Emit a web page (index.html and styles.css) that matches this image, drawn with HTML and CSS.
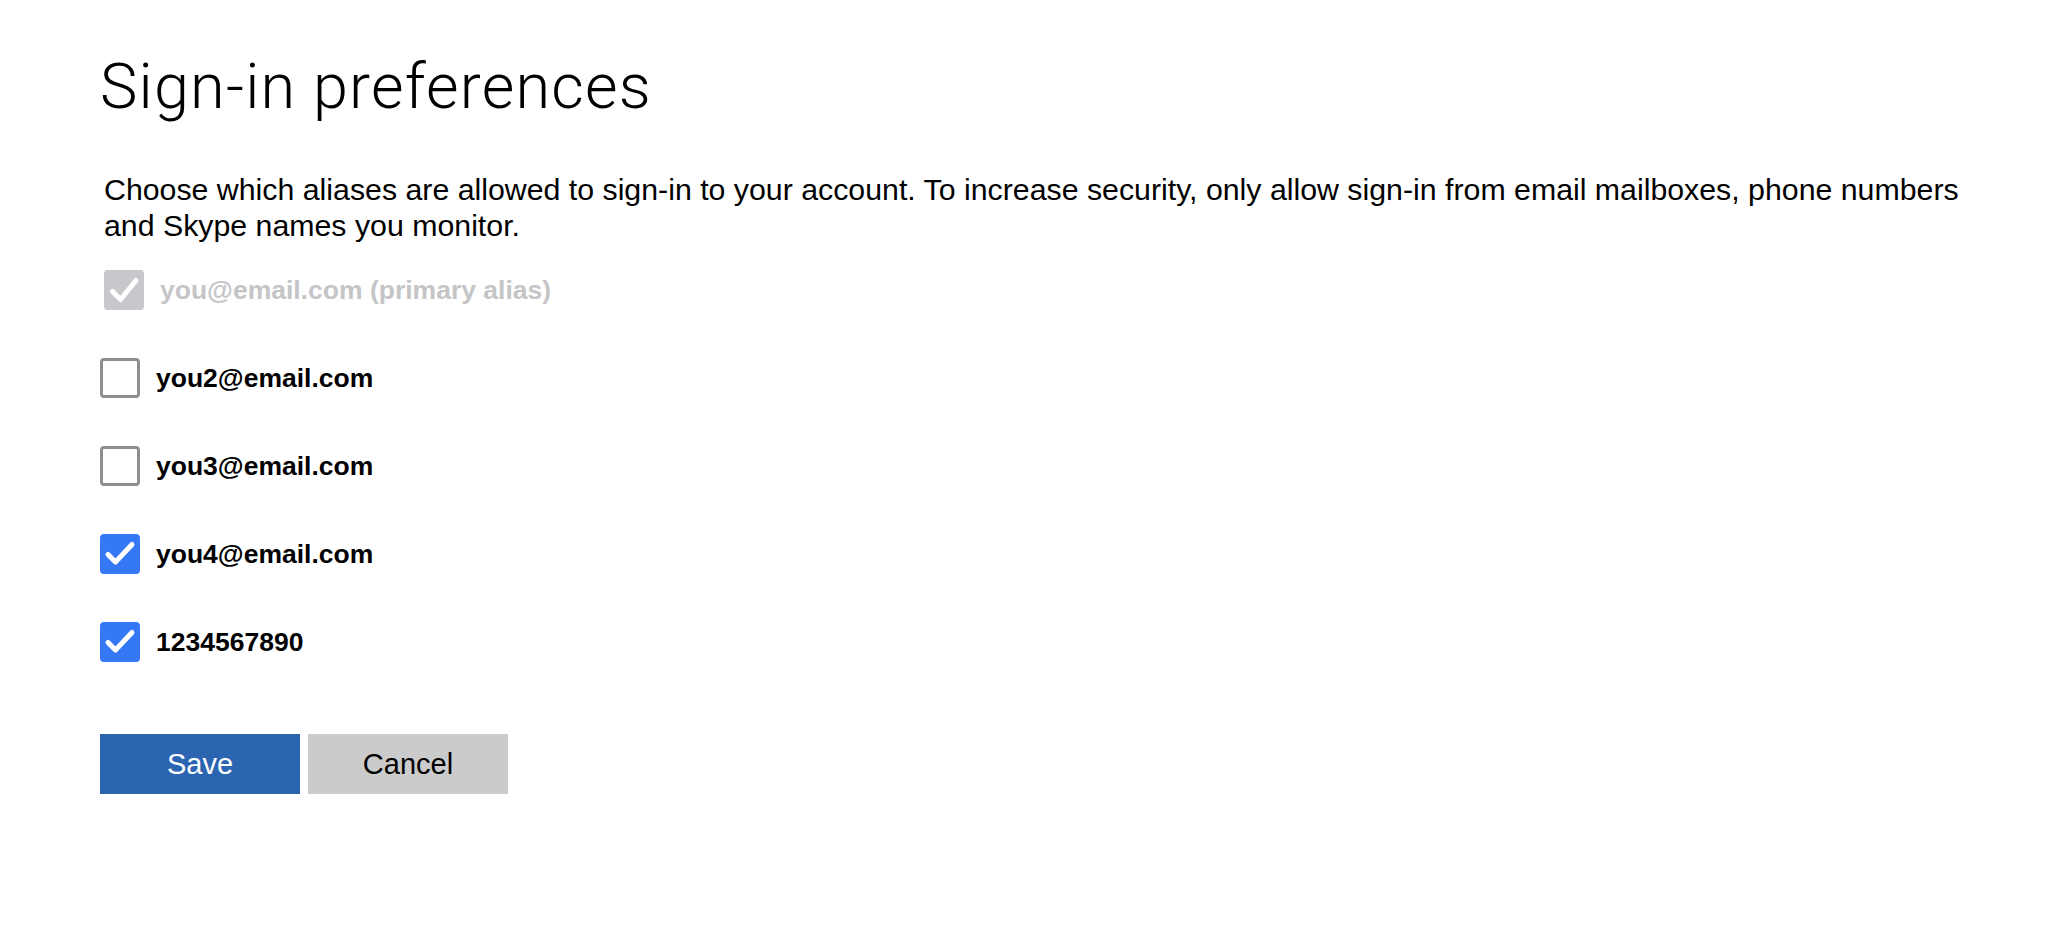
FILE: index.html
```html
<!DOCTYPE html>
<html lang="en">
<head>
<meta charset="utf-8">
<title>Sign-in preferences</title>
<link rel="stylesheet" href="styles.css">
</head>
<body>
<main class="page">
  <h1 class="title">Sign-in preferences</h1>
  <p class="intro">Choose which aliases are allowed to sign-in to your account. To increase security, only allow sign-in from email mailboxes, phone numbers and Skype names you monitor.</p>
  <ul class="aliases">
    <li class="alias alias-disabled">
      <span class="box box-disabled">
        <svg viewBox="0 0 40 40" class="tick"><path d="M8.5 21.5 L16.5 29.5 L32 10.5"/></svg>
      </span>
      <span class="alias-label">you@email.com (primary alias)</span>
    </li>
    <li class="alias">
      <span class="box box-empty"></span>
      <span class="alias-label">you2@email.com</span>
    </li>
    <li class="alias">
      <span class="box box-empty"></span>
      <span class="alias-label">you3@email.com</span>
    </li>
    <li class="alias">
      <span class="box box-checked">
        <svg viewBox="0 0 40 40" class="tick"><path d="M8 20.5 L15.5 28 L32 10.5"/></svg>
      </span>
      <span class="alias-label">you4@email.com</span>
    </li>
    <li class="alias">
      <span class="box box-checked">
        <svg viewBox="0 0 40 40" class="tick"><path d="M8 20.5 L15.5 28 L32 10.5"/></svg>
      </span>
      <span class="alias-label">1234567890</span>
    </li>
  </ul>
  <div class="actions">
    <button class="btn btn-primary" type="button">Save</button>
    <button class="btn btn-secondary" type="button">Cancel</button>
  </div>
</main>
</body>
</html>
```
FILE: styles.css
```css
html, body {
  margin: 0;
  padding: 0;
  background: #ffffff;
}

.page {
  padding: 52px 100px 0 100px;
  font-family: "Liberation Sans", Arial, Helvetica, sans-serif;
  color: #000;
}

.title {
  margin: 0;
  font-family: Roboto, "Liberation Sans", sans-serif;
  font-weight: 300;
  font-size: 63px;
  line-height: 70px;
  letter-spacing: 1.2px;
  color: #000;
}

.intro {
  margin: 50px 0 0 4px;
  max-width: 1890px;
  font-size: 30.3px;
  line-height: 36px;
}

.aliases {
  list-style: none;
  margin: 26px 0 0 0;
  padding: 0;
  display: flex;
  flex-direction: column;
  gap: 48px;
}

.alias {
  display: flex;
  align-items: center;
  gap: 16px;
  height: 40px;
}

.alias-disabled {
  margin-left: 4px;
}

.alias-label {
  font-size: 26.5px;
  font-weight: 700;
  color: #000;
}

.alias-disabled .alias-label {
  color: #c5c5c7;
}

.box {
  box-sizing: border-box;
  width: 40px;
  height: 40px;
  border-radius: 4px;
  flex: none;
  display: block;
}

.box-empty {
  border: 3px solid #8e8e93;
  background: #fff;
}

.box-checked {
  background: #3478f6;
}

.box-disabled {
  background: #c8c8cc;
}

.tick {
  display: block;
  width: 40px;
  height: 40px;
  fill: none;
  stroke: #fff;
  stroke-width: 5;
  stroke-linecap: round;
  stroke-linejoin: round;
}

.actions {
  display: flex;
  gap: 8px;
  margin-top: 72px;
}

.btn {
  width: 200px;
  height: 60px;
  border: 0;
  border-radius: 0;
  padding: 0;
  font-family: "Liberation Sans", Arial, Helvetica, sans-serif;
  font-size: 29px;
  cursor: pointer;
}

.btn-primary {
  background: #2b65b1;
  color: #fff;
}

.btn-secondary {
  background: #cbcbcb;
  color: #000;
}
```
